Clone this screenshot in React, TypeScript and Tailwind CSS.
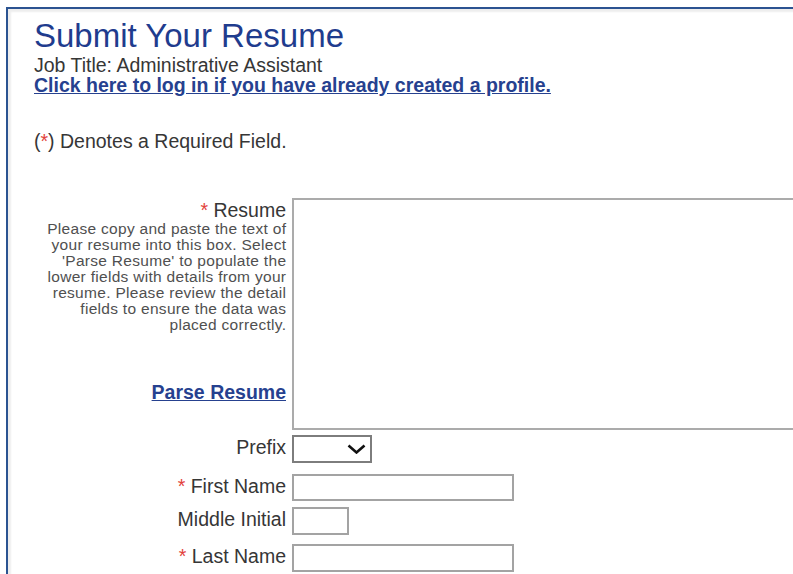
import type { ReactNode } from 'react';

const Req = () => <span className="text-[#e2413b]">*</span>;

interface RowProps {
  label: ReactNode;
  className?: string;
  children: ReactNode;
}

// one labelled line of the form: right-aligned label, control to its right
function Row({ label, className, children }: RowProps) {
  return (
    <div className={`flex items-center ${className ?? ''}`}>
      <label className="w-[252px] shrink-0 text-right text-[19.5px] leading-[22px] mb-[4px] whitespace-nowrap">
        {label}
      </label>
      <div className="ml-[6px]">{children}</div>
    </div>
  );
}

function PrefixSelect() {
  return (
    <div className="w-[80px] h-[28px] border-2 border-[#7d7d7d] bg-white flex items-center justify-end pr-[4px]">
      <svg width="19" height="10" viewBox="0 0 19 10" fill="none">
        <polyline points="1.5,1.5 9.5,8.5 17.5,1.5" stroke="#111" strokeWidth="2.6" strokeLinejoin="miter" />
      </svg>
    </div>
  );
}

export default function App() {
  return (
    <div className="w-[793px] h-[574px] overflow-hidden bg-white pl-[6px] pt-[7px] font-['Liberation_Sans',Arial,sans-serif] text-[#363636]">
      <div className="w-[860px] h-[620px] border-l-2 border-t-2 border-[#2b5391] shadow-[inset_3px_3px_2px_rgba(0,0,0,0.07)] pl-[26px] pt-[8px]">
        <h1 className="text-[33px] leading-[38px] text-[#1f3c8e]">Submit Your Resume</h1>
        <p className="text-[19.5px] leading-[20px]">Job Title: Administrative Assistant</p>
        <a href="#" className="block w-fit text-[19.5px] leading-[20px] font-bold underline text-[#26418f]">
          Click here to log in if you have already created a profile.
        </a>
        <p className="mt-[36px] text-[19.5px] leading-[20px]">
          (<Req />) Denotes a Required Field.
        </p>

        <form className="mt-[47px]">
          <div className="flex items-start">
            <div className="w-[252px] shrink-0 text-right">
              <div className="pt-[1px] text-[19.5px] leading-[22px]">
                <Req /> Resume
              </div>
              <p className="text-[15.5px] leading-[16px] tracking-[0.3px] text-[#505050] whitespace-nowrap -mr-[0.3px]">
                Please copy and paste the text of
                <br />
                your resume into this box. Select
                <br />
                'Parse Resume' to populate the
                <br />
                lower fields with details from your
                <br />
                resume. Please review the detail
                <br />
                fields to ensure the data was
                <br />
                placed correctly.
              </p>
              <a href="#" className="block mt-[48px] text-[19.5px] leading-[22px] font-bold underline text-[#26418f]">
                Parse Resume
              </a>
            </div>
            <textarea className="ml-[6px] w-[560px] h-[232px] border-2 border-[#ababab] bg-white resize-none outline-none" />
          </div>

          <Row label="Prefix" className="mt-[5px]">
            <PrefixSelect />
          </Row>
          <Row label={<><Req /> First Name</>} className="mt-[11px]">
            <input className="block w-[222px] h-[27px] border-2 border-[#a3a3a3] bg-white outline-none" />
          </Row>
          <Row label="Middle Initial" className="mt-[6px]">
            <input className="block w-[57px] h-[28px] border-2 border-[#a3a3a3] bg-white outline-none" />
          </Row>
          <Row label={<><Req /> Last Name</>} className="mt-[9px]">
            <input className="block w-[222px] h-[28px] border-2 border-[#a3a3a3] bg-white outline-none" />
          </Row>
        </form>
      </div>
    </div>
  );
}
